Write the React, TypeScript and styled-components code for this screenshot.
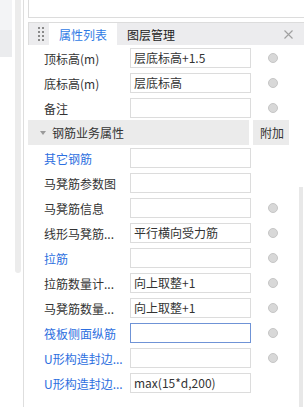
import React from 'react';
import styled, { createGlobalStyle } from 'styled-components';

const GlobalStyle = createGlobalStyle`
  html, body {
    margin: 0;
    padding: 0;
    background: #fff;
  }
  body {
    font-family: "Microsoft YaHei", "Noto Sans CJK SC", "Noto Sans", sans-serif;
    font-size: 12px;
    color: #333;
  }
`;

interface PropRow {
  label: string;
  value?: string;
  blue?: boolean;
  radio?: boolean;
  focused?: boolean;
}

const baseRows: PropRow[] = [
  { label: '顶标高(m)', value: '层底标高+1.5', radio: true },
  { label: '底标高(m)', value: '层底标高', radio: true },
  { label: '备注', radio: true },
];

const rebarRows: PropRow[] = [
  { label: '其它钢筋', blue: true },
  { label: '马凳筋参数图' },
  { label: '马凳筋信息', radio: true },
  { label: '线形马凳筋...', value: '平行横向受力筋', radio: true },
  { label: '拉筋', blue: true, radio: true },
  { label: '拉筋数量计...', value: '向上取整+1', radio: true },
  { label: '马凳筋数量...', value: '向上取整+1', radio: true },
  { label: '筏板侧面纵筋', blue: true, focused: true, radio: true },
  { label: 'U形构造封边...', blue: true, radio: true },
  { label: 'U形构造封边...', blue: true, value: 'max(15*d,200)' },
];

const Page = styled.div`
  display: flex;
  width: 304px;
  height: 407px;
  overflow: hidden;
  background: #fff;
`;

const SideStrip = styled.div`
  width: 12px;
  display: flex;
  flex-direction: column;
`;

const SideBlock = styled.div<{ $h: number; $tone: string }>`
  height: ${(p) => p.$h}px;
  background: ${(p) => p.$tone};
`;

const SideScroll = styled.div`
  width: 12px;
  padding-left: 3px;
  box-sizing: border-box;
  border-right: 1px solid #dedede;
`;

const SideThumb = styled.div`
  width: 6px;
  height: 273px;
  background: #ececec;
  border-radius: 0 0 3px 3px;
`;

const Panel = styled.div`
  flex: 1;
  margin-left: 4px;
  display: flex;
  flex-direction: column;
  min-width: 0;
`;

const TopBox = styled.div`
  height: 22px;
  border-left: 1px solid #dcdcdc;
  border-bottom: 1px solid #dcdcdc;
`;

const TabBar = styled.div`
  margin-top: 4px;
  height: 28px;
  display: flex;
  align-items: stretch;
  background: #ececee;
  border-top: 1px solid #dcdcdc;
  border-left: 1px solid #dcdcdc;
`;

const Grip = styled.div`
  width: 20px;
  display: grid;
  grid-template-columns: 2px 2px;
  grid-auto-rows: 2px;
  column-gap: 2px;
  row-gap: 2px;
  align-content: center;
  padding-left: 9px;
  box-sizing: border-box;
  span {
    background: #8a8a8a;
  }
`;

const Tab = styled.div<{ $active?: boolean }>`
  width: 68px;
  display: flex;
  align-items: center;
  justify-content: center;
  background: ${(p) => (p.$active ? '#fff' : 'transparent')};
  color: ${(p) => (p.$active ? '#2f7be5' : '#222')};
  font-size: 12px;
`;

const Close = styled.div`
  margin-left: auto;
  width: 20px;
  display: flex;
  align-items: center;
  justify-content: flex-start;
`;

const Body = styled.div`
  display: flex;
  flex: 1;
`;

const Rows = styled.div`
  width: 271px;
  display: flex;
  flex-direction: column;
`;

const Row = styled.div`
  height: 25px;
  display: grid;
  grid-template-columns: 102px 121px 48px;
  align-items: center;
`;

const Label = styled.div<{ $blue?: boolean }>`
  padding-left: 16px;
  padding-top: 2px;
  color: ${(p) => (p.$blue ? '#2d6fe0' : '#333')};
  white-space: nowrap;
  overflow: hidden;
`;

const Field = styled.div<{ $focused?: boolean }>`
  height: 20px;
  box-sizing: border-box;
  border: 1px solid ${(p) => (p.$focused ? '#6f93d6' : '#dcdcdc')};
  padding-left: 3px;
  display: flex;
  align-items: center;
  color: #333;
  white-space: nowrap;
  overflow: hidden;
`;

const RadioCell = styled.div`
  display: flex;
  padding-left: 17px;
`;

const Radio = styled.div`
  width: 8px;
  height: 8px;
  border-radius: 50%;
  background: #d8d8d8;
  border: 1px solid #c6c6c6;
`;

const GroupHeader = styled.div`
  height: 25px;
  display: grid;
  grid-template-columns: 223px 38px 10px;
  column-gap: 0;
`;

const GroupTitle = styled.div`
  background: #ebebeb;
  display: flex;
  align-items: center;
  padding-left: 12px;
  gap: 6px;
  color: #333;
  margin-right: 2px;
  &::before {
    content: '';
    border-left: 3px solid transparent;
    border-right: 3px solid transparent;
    border-top: 4px solid #9a9a9a;
  }
`;

const GroupExtra = styled.div`
  background: #ebebeb;
  display: flex;
  align-items: center;
  padding-left: 7px;
  margin-left: 2px;
  color: #333;
`;

const Rail = styled.div`
  width: 4px;
  padding-top: 142px;
`;

const RailThumb = styled.div`
  height: 220px;
  background: #e8e8e8;
`;

const PropertyRow: React.FC<{ row: PropRow }> = ({ row }) => (
  <Row>
    <Label $blue={row.blue}>{row.label}</Label>
    <Field $focused={row.focused}>{row.value}</Field>
    <RadioCell>{row.radio && <Radio />}</RadioCell>
  </Row>
);

export default function App() {
  return (
    <Page>
      <GlobalStyle />
      <SideStrip>
        <SideBlock $h={30} $tone='#f3f4f6' />
        <SideBlock $h={27} $tone='#ebecee' />
      </SideStrip>
      <SideScroll>
        <SideThumb />
      </SideScroll>
      <Panel>
        <TopBox />
        <TabBar>
          <Grip>
            {Array.from({ length: 8 }).map((_, i) => <span key={i} />)}
          </Grip>
          <Tab $active>{'属性列表'}</Tab>
          <Tab>{'图层管理'}</Tab>
          <Close>
            <svg width='9' height='9' viewBox='0 0 9 9'>
              <path d='M0.5 0.5 L8.5 8.5 M8.5 0.5 L0.5 8.5' stroke='#a0a0a0' strokeWidth='1.1' />
            </svg>
          </Close>
        </TabBar>
        <Body>
          <Rows>
            {baseRows.map((r, i) => <PropertyRow key={`b${i}`} row={r} />)}
            <GroupHeader>
              <GroupTitle>{'钢筋业务属性'}</GroupTitle>
              <GroupExtra>{'附加'}</GroupExtra>
            </GroupHeader>
            {rebarRows.map((r, i) => <PropertyRow key={`r${i}`} row={r} />)}
          </Rows>
          <Rail>
            <RailThumb />
          </Rail>
        </Body>
      </Panel>
    </Page>
  );
}
